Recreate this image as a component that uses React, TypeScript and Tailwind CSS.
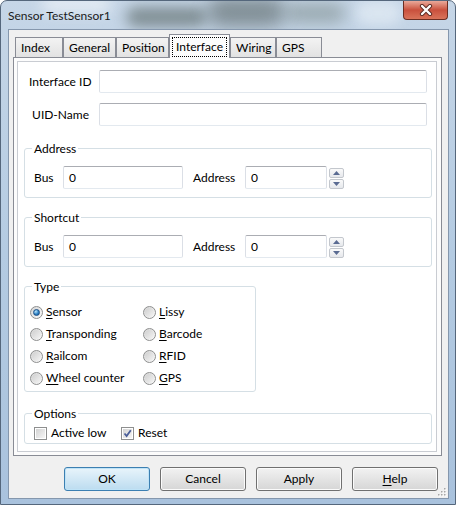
import React from "react";

const U = ({ c }: { c: string }) => <span className="underline underline-offset-[2px]">{c}</span>;

function TextBox({ w, value }: { w: string; value?: string }) {
  return (
    <div
      className={`${w} h-[23px] shrink-0 rounded-[2px] border border-[#abadb3] border-l-[#dbdfe6] border-r-[#dbdfe6] border-b-[#e3e9ef] bg-white pl-[5px] flex items-center`}
    >
      {value}
    </div>
  );
}

function Spin() {
  return (
    <div className="ml-[2px] flex flex-col gap-[1px] pt-[2px]">
      <div className="w-[15px] h-[10px] rounded-[2px] border border-[#c3c7cd] bg-gradient-to-b from-[#fafafa] to-[#e6e8ec] flex items-center justify-center">
        <svg width="7" height="4" viewBox="0 0 7 4">
          <path d="M0 4 L3.5 0 L7 4 Z" fill="#5a6b92" />
        </svg>
      </div>
      <div className="w-[15px] h-[10px] rounded-[2px] border border-[#c3c7cd] bg-gradient-to-b from-[#fafafa] to-[#e6e8ec] flex items-center justify-center">
        <svg width="7" height="4" viewBox="0 0 7 4">
          <path d="M0 0 L7 0 L3.5 4 Z" fill="#5a6b92" />
        </svg>
      </div>
    </div>
  );
}

function Group({
  title,
  w,
  h,
  children,
  className = "",
}: {
  title: string;
  w: string;
  h: string;
  children: React.ReactNode;
  className?: string;
}) {
  return (
    <div className={`relative ${w} ${h} shrink-0 rounded-[3px] border border-[#d5dfe5] ${className}`}>
      <div className="absolute -top-[9px] left-[7px] px-[2px] bg-white leading-[18px]">{title}</div>
      {children}
    </div>
  );
}

function BusRow() {
  return (
    <div className="flex items-start pt-[17px] pl-[9px]">
      <div className="w-[29px] h-[23px] flex items-center">Bus</div>
      <TextBox w="w-[120px]" value="0" />
      <div className="ml-[10px] w-[52px] h-[23px] flex items-center">Address</div>
      <TextBox w="w-[82px]" value="0" />
      <Spin />
    </div>
  );
}

function Radio({ on, children }: { on?: boolean; children: React.ReactNode }) {
  return (
    <div className="flex items-center h-[22px]">
      <div className="w-[13px] h-[13px] rounded-full border border-[#8e8f8f] bg-gradient-to-br from-[#d6d6d6] to-[#fbfbfb] flex items-center justify-center">
        {on ? (
          <div className="w-[7px] h-[7px] rounded-full border border-[#1b4f86] bg-[radial-gradient(circle_at_35%_30%,#b9e5fb,#2f83c6_55%,#10508e)]" />
        ) : (
          <div className="w-[9px] h-[9px] rounded-full bg-gradient-to-br from-[#cfcfcf] to-[#f4f4f4]" />
        )}
      </div>
      <span className="ml-[3px]">{children}</span>
    </div>
  );
}

function Check({ on, children }: { on?: boolean; children: React.ReactNode }) {
  return (
    <div className="flex items-center">
      <div className="w-[13px] h-[13px] border border-[#8e8f8f] bg-white flex items-center justify-center">
        <div className="w-[9px] h-[9px] bg-gradient-to-br from-[#d3d3d3] to-[#f6f6f6] flex items-center justify-center">
          {on && (
            <svg width="9" height="9" viewBox="0 0 9 9">
              <path d="M1.5 4.5 L3.6 7 L7.8 1.2" fill="none" stroke="#4a5e99" strokeWidth="1.8" />
            </svg>
          )}
        </div>
      </div>
      <span className="ml-[4px]">{children}</span>
    </div>
  );
}

function Tab({ label, w, active }: { label: string; w: string; active?: boolean }) {
  if (active) {
    return (
      <div
        className={`${w} h-[24px] -mb-[1px] relative z-10 border border-b-0 border-[#898c95] bg-[#fcfcfc] flex items-start justify-center pt-[2px]`}
      >
        <span className="border border-dotted border-black px-[3px] leading-[18px]">{label}</span>
      </div>
    );
  }
  return (
    <div
      className={`${w} h-[20px] border border-b-0 border-[#898c95] bg-gradient-to-b from-[#f3f3f3] to-[#e2e2e2] flex items-center pl-[5px]`}
    >
      {label}
    </div>
  );
}

function Button({ children, primary }: { children: React.ReactNode; primary?: boolean }) {
  return (
    <div
      className={`w-[86px] h-[24px] rounded-[3px] border flex items-center justify-center ${
        primary
          ? "border-[#3c7fb1] bg-gradient-to-b from-[#e8f4fb] to-[#bcdcf0] shadow-[inset_0_0_0_1px_#bfe3f7]"
          : "border-[#707070] bg-gradient-to-b from-[#f2f2f2] to-[#d6d6d6] shadow-[inset_0_0_0_1px_#fbfbfb]"
      }`}
    >
      {children}
    </div>
  );
}

export default function App() {
  return (
    <div className="w-[456px] h-[505px] overflow-hidden bg-white font-['Lato',sans-serif] text-[12px] whitespace-nowrap text-black">
      <div className="relative w-[456px] h-[505px] rounded-t-[7px] border border-[#55677c] bg-gradient-to-b from-[#c6d6e7] via-[#b4cbe2] to-[#a9c2dd] overflow-hidden">
        {/* blurred desktop behind the glass title bar */}
        <div className="absolute left-[125px] top-[6px] w-[80px] h-[20px] rounded-full bg-[#3d4a44] opacity-50 blur-[7px]" />
        <div className="absolute left-[205px] top-[-4px] w-[80px] h-[30px] rounded-full bg-[#2f3a35] opacity-45 blur-[9px]" />
        <div className="absolute left-[285px] top-[2px] w-[60px] h-[20px] rounded-full bg-[#5b6a62] opacity-40 blur-[8px]" />
        <div className="absolute left-[40px] top-[-6px] w-[70px] h-[18px] rounded-full bg-[#eef3f8] opacity-70 blur-[7px]" />
        <div className="absolute left-[355px] top-[0px] w-[45px] h-[24px] rounded-full bg-[#e8f0f7] opacity-60 blur-[6px]" />

        {/* title */}
        <div className="relative h-[28px] flex items-center pl-[7px] pt-[2px] text-[#1a1a1a]">Sensor TestSensor1</div>

        {/* close button */}
        <div className="absolute top-0 right-[7px] w-[45px] h-[19px] rounded-b-[4px] border border-t-0 border-[#6b2d22] bg-gradient-to-b from-[#e9a99a] via-[#c9503d] to-[#d9735a] flex items-center justify-center">
          <svg width="14" height="12" viewBox="0 0 14 12">
            <path d="M3 2 L11 10 M11 2 L3 10" stroke="#5a2a22" strokeWidth="4.2" strokeLinecap="round" />
            <path d="M3 2 L11 10 M11 2 L3 10" stroke="#ffffff" strokeWidth="2.4" strokeLinecap="round" />
          </svg>
        </div>

        {/* client area */}
        <div className="relative mx-[7px] w-[441px] h-[470px] border border-[#8597ad] bg-[#f0f0f0] flex flex-col">
          {/* tab strip */}
          <div className="h-[23px] mt-[4px] pl-[6px] flex items-end">
            <Tab label="Index" w="w-[48px]" />
            <Tab label="General" w="w-[53px]" />
            <Tab label="Position" w="w-[53px]" />
            <Tab label="Interface" w="w-[61px]" active />
            <Tab label="Wiring" w="w-[46px]" />
            <Tab label="GPS" w="w-[46px]" />
          </div>

          {/* tab page */}
          <div className="ml-[4px] w-[429px] h-[399px] border border-[#898c95] bg-[#fcfcfc] pt-[3px] pl-[3px]">
            <div className="w-[420px] h-[391px] border border-[#c9ccd2] bg-white flex flex-col">
              <div className="flex items-center pt-[8px] pl-[11px]">
                <div className="w-[60px] text-right">Interface ID</div>
                <div className="ml-[10px]">
                  <TextBox w="w-[328px]" />
                </div>
              </div>
              <div className="flex items-center mt-[10px] pl-[11px]">
                <div className="w-[60px] text-right">UID-Name</div>
                <div className="ml-[10px]">
                  <TextBox w="w-[328px]" />
                </div>
              </div>

              <div className="pl-[6px] flex flex-col">
                <Group title="Address" w="w-[408px]" h="h-[50px]" className="mt-[22px]">
                  <BusRow />
                </Group>
                <Group title="Shortcut" w="w-[408px]" h="h-[50px]" className="mt-[19px]">
                  <BusRow />
                </Group>
                <Group title="Type" w="w-[232px]" h="h-[106px]" className="mt-[19px]">
                  <div className="flex pt-[14px] pl-[5px]">
                    <div className="w-[113px] flex flex-col">
                      <Radio on>
                        <U c="S" />ensor
                      </Radio>
                      <Radio>
                        <U c="T" />ransponding
                      </Radio>
                      <Radio>
                        <U c="R" />ailcom
                      </Radio>
                      <Radio>
                        <U c="W" />heel counter
                      </Radio>
                    </div>
                    <div className="flex flex-col">
                      <Radio>
                        <U c="L" />issy
                      </Radio>
                      <Radio>
                        <U c="B" />arcode
                      </Radio>
                      <Radio>
                        <U c="R" />FID
                      </Radio>
                      <Radio>
                        <U c="G" />PS
                      </Radio>
                    </div>
                  </div>
                </Group>
                <Group title="Options" w="w-[408px]" h="h-[31px]" className="mt-[21px]">
                  <div className="flex pt-[10px] pl-[9px]">
                    <div className="w-[87px]">
                      <Check>Active low</Check>
                    </div>
                    <Check on>Reset</Check>
                  </div>
                </Group>
              </div>
            </div>
          </div>

          {/* dialog buttons */}
          <div className="mt-[11px] flex justify-end gap-[10px] pr-[10px]">
            <Button primary>OK</Button>
            <Button>Cancel</Button>
            <Button>Apply</Button>
            <Button>
              <span>
                <U c="H" />elp
              </span>
            </Button>
          </div>

          {/* size grip */}
          <svg className="absolute right-[1px] bottom-[1px]" width="10" height="10" viewBox="0 0 10 10">
            {[
              [8, 2],
              [8, 5],
              [8, 8],
              [5, 5],
              [5, 8],
              [2, 8],
            ].map(([x, y], i) => (
              <g key={i}>
                <rect x={x} y={y} width="1.5" height="1.5" fill="#ffffff" />
                <rect x={x - 1} y={y - 1} width="1.5" height="1.5" fill="#a7a7a7" />
              </g>
            ))}
          </svg>
        </div>
      </div>
    </div>
  );
}
